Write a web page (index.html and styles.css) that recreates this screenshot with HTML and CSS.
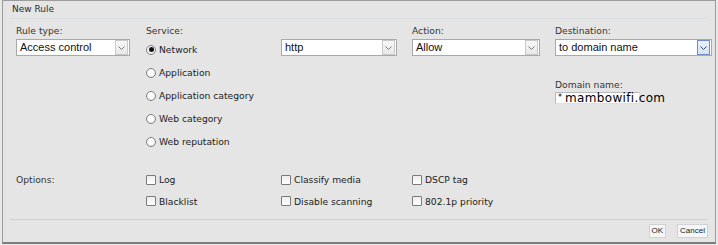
FILE: index.html
```html
<!DOCTYPE html>
<html lang="en">
<head>
  <meta charset="UTF-8" />
  <title>New Rule</title>
  <link rel="stylesheet" href="styles.css">
</head>
<body>
  <div class="dialog">
    <div class="dialog-title">New Rule</div>

    <div class="rule-form">
      <div class="field">
        <span class="field-label">Rule type:</span>
        <div class="select select-rule">
          <span class="select-value">Access control</span>
          <span class="select-arrow"><svg width="7" height="4" viewBox="0 0 7 4"><path d="M0.5 0.5L3.5 3.5L6.5 0.5" /></svg></span>
        </div>
      </div>

      <div class="field">
        <span class="field-label">Service:</span>
        <ul class="radio-list">
          <li class="radio-item"><span class="radio checked"></span>Network</li>
          <li class="radio-item"><span class="radio"></span>Application</li>
          <li class="radio-item"><span class="radio"></span>Application category</li>
          <li class="radio-item"><span class="radio"></span>Web category</li>
          <li class="radio-item"><span class="radio"></span>Web reputation</li>
        </ul>
      </div>

      <div class="field">
        <span class="field-label"></span>
        <div class="select select-service">
          <span class="select-value">http</span>
          <span class="select-arrow"><svg width="7" height="4" viewBox="0 0 7 4"><path d="M0.5 0.5L3.5 3.5L6.5 0.5" /></svg></span>
        </div>
      </div>

      <div class="field">
        <span class="field-label">Action:</span>
        <div class="select select-action">
          <span class="select-value">Allow</span>
          <span class="select-arrow"><svg width="7" height="4" viewBox="0 0 7 4"><path d="M0.5 0.5L3.5 3.5L6.5 0.5" /></svg></span>
        </div>
      </div>

      <div class="field">
        <span class="field-label">Destination:</span>
        <div class="select select-dest">
          <span class="select-value">to domain name</span>
          <span class="select-arrow focus"><svg width="7" height="4" viewBox="0 0 7 4"><path d="M0.5 0.5L3.5 3.5L6.5 0.5" /></svg></span>
        </div>
        <span class="field-label domain-label">Domain name:</span>
        <div class="text-input"><span class="star">*</span>mambowifi.com</div>
      </div>
    </div>

    <div class="options">
      <span class="options-label">Options:</span>
      <ul class="check-list">
        <li class="check-item"><span class="checkbox"></span>Log</li>
        <li class="check-item"><span class="checkbox"></span>Blacklist</li>
      </ul>
      <ul class="check-list">
        <li class="check-item"><span class="checkbox"></span>Classify media</li>
        <li class="check-item"><span class="checkbox"></span>Disable scanning</li>
      </ul>
      <ul class="check-list">
        <li class="check-item"><span class="checkbox"></span>DSCP tag</li>
        <li class="check-item"><span class="checkbox"></span>802.1p priority</li>
      </ul>
    </div>

    <div class="dialog-footer">
      <button class="btn">OK</button>
      <button class="btn">Cancel</button>
    </div>
  </div>
</body>
</html>
```

FILE: styles.css
```css
* { box-sizing: border-box; margin: 0; padding: 0; }
body {
  font-family: "DejaVu Sans", Verdana, sans-serif;
  font-size: 9.2px;
  background-color: #e9e9e9;
  color: #333;
}

.dialog {
  display: flex;
  flex-direction: column;
  height: 244px;
  margin: 0 2px;
  background-color: #e5e5e5;
  border: 1px solid #9c9c9c;
  border-bottom: 2px solid #7c7c7c;
}
.dialog-title {
  margin: 0 7px;
  padding: 2px 2px 3px;
  font-size: 9px;
  line-height: 12px;
  color: #2b2b2b;
  border-bottom: 1px solid #dadfe4;
}

/* top part: five columns */
.rule-form,
.options {
  display: grid;
  grid-template-columns: 130px 135px 131px 143px 1fr;
  padding: 0 3px 0 13px;
}
.rule-form { padding-top: 6px; }
.field-label {
  display: block;
  height: 11px;
  line-height: 11px;
  margin-bottom: 3px;
  color: #353535;
  white-space: nowrap;
}

.select {
  display: flex;
  height: 17px;
  background-color: #fff;
  border: 1px solid #a9a9a9;
}
.select-rule { width: 114px; }
.select-service { width: 116px; }
.select-action { width: 128px; }
.select-dest { width: 157px; }
.select-value {
  flex: 1;
  padding-left: 3px;
  font-family: "Liberation Sans", Arial, sans-serif;
  font-size: 11px;
  line-height: 15px;
  color: #111;
  white-space: nowrap;
  overflow: hidden;
}
.select-arrow {
  display: flex;
  align-items: center;
  justify-content: center;
  width: 13px;
  margin-right: 1px;
  background: linear-gradient(#f8f8f8, #e9e9e9);
  border: 1px solid #c9c9c9;
}
.select-arrow path {
  fill: none;
  stroke: #7a7a7a;
  stroke-width: 1;
}
.select-arrow.focus {
  background: linear-gradient(#eaf1fa, #d6e3f3);
  border-color: #6d8fc6;
}
.select-arrow.focus path { stroke: #3d4f6a; }

.radio-list {
  list-style: none;
  display: flex;
  flex-direction: column;
  gap: 9px;
  padding-top: 3.5px;
}
.radio-item,
.check-item {
  display: flex;
  align-items: center;
  gap: 3px;
  height: 14px;
  color: #222;
  white-space: nowrap;
}
.radio {
  position: relative;
  flex-shrink: 0;
  width: 10px;
  height: 10px;
  border-radius: 50%;
  border: 1px solid #7f7f7f;
  background: radial-gradient(circle at 50% 40%, #fff 35%, #e2e2e2);
}
.radio.checked::after {
  content: '';
  position: absolute;
  left: 1.5px;
  top: 1.5px;
  width: 5px;
  height: 5px;
  border-radius: 50%;
  background-color: #111;
}

.domain-label { margin-top: 23px; margin-bottom: 2px; }
.text-input {
  width: 85px;
  height: 12px;
  padding-left: 2px;
  background-color: #fff;
  border: 1px solid #b8b8b8;
  border-right-color: #e0e0e0;
  border-bottom-color: #e0e0e0;
  font-size: 12px;
  line-height: 10px;
  letter-spacing: 0.35px;
  color: #000;
  white-space: nowrap;
  overflow: visible;
}
.text-input .star {
  font-size: 8px;
  letter-spacing: 0;
  margin-right: 3px;
  vertical-align: 2px;
}

/* options */
.options { margin-top: 24px; }
.options-label {
  line-height: 14px;
  color: #353535;
}
.check-list {
  list-style: none;
  display: flex;
  flex-direction: column;
  gap: 7.7px;
}
.checkbox {
  flex-shrink: 0;
  width: 10px;
  height: 10px;
  border: 1px solid #7a7a7a;
  border-radius: 1px;
  background: linear-gradient(#ededed, #fff);
}

.dialog-footer {
  display: flex;
  justify-content: flex-end;
  gap: 11px;
  margin: 11px 7px 0;
  padding-top: 4px;
  border-top: 1px solid #c9d3dc;
}
.btn {
  height: 14px;
  padding: 0 2px;
  font-family: "Liberation Sans", Arial, sans-serif;
  font-size: 8px;
  line-height: 12px;
  color: #222;
  background-color: #f6f6f6;
  border: 1px solid #d2d2d2;
}
```
